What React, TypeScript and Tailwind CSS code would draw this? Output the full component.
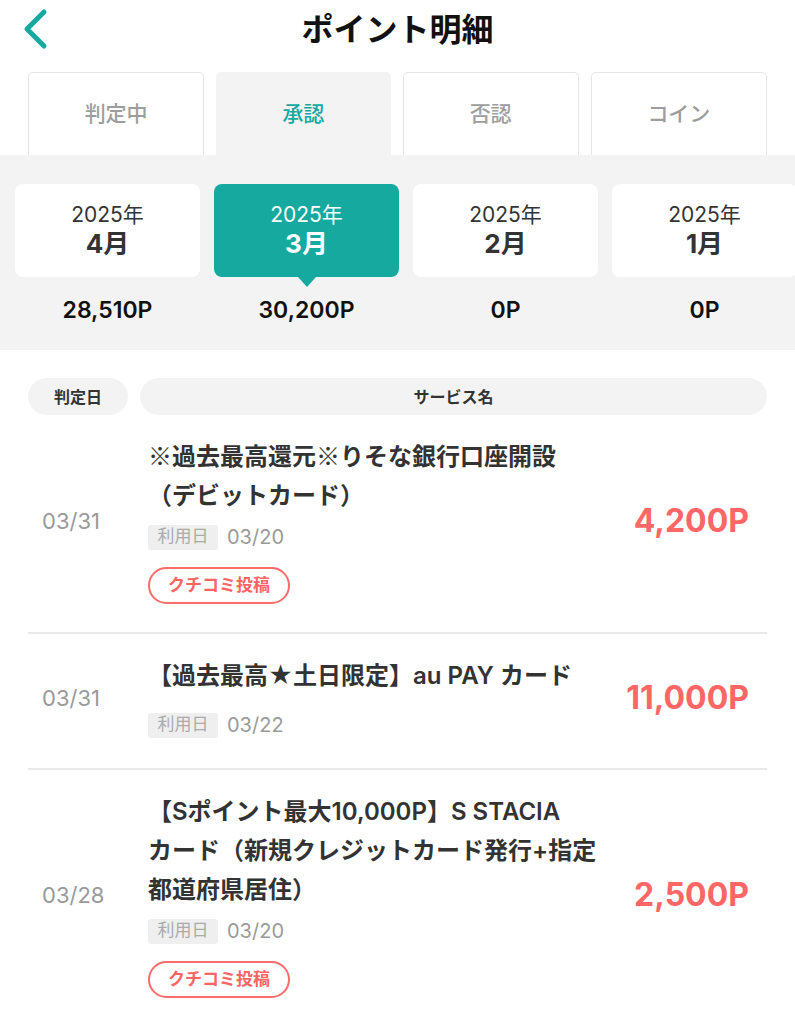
import React from 'react';

const TEAL = '#15a99f';

type Item = {
  date: string;
  lines: string[];
  useDate: string;
  points: string;
  review: boolean;
};

const tabs = ['判定中', '承認', '否認', 'コイン'];

const months = [
  { year: '2025年', month: '4月', points: '28,510P' },
  { year: '2025年', month: '3月', points: '30,200P', active: true },
  { year: '2025年', month: '2月', points: '0P' },
  { year: '2025年', month: '1月', points: '0P' },
];

const items: Item[] = [
  {
    date: '03/31',
    lines: ['※過去最高還元※りそな銀行口座開設', '（デビットカード）'],
    useDate: '03/20',
    points: '4,200P',
    review: true,
  },
  {
    date: '03/31',
    lines: ['【過去最高★土日限定】au PAY カード'],
    useDate: '03/22',
    points: '11,000P',
    review: false,
  },
  {
    date: '03/28',
    lines: ['【Sポイント最大10,000P】S STACIA', 'カード（新規クレジットカード発行+指定', '都道府県居住）'],
    useDate: '03/20',
    points: '2,500P',
    review: true,
  },
];

function BackIcon() {
  return (
    <svg width="30" height="44" viewBox="0 0 30 44" fill="none">
      <polyline
        points="22,4 5,21 22,38"
        stroke={TEAL}
        strokeWidth="5"
        strokeLinecap="round"
        strokeLinejoin="round"
      />
    </svg>
  );
}

// Inter has its own small ※, so force the full-width CJK one
function TitleLine({ text }: { text: string }) {
  return (
    <div className="h-[39px] overflow-visible whitespace-nowrap text-[24px] font-semibold leading-[39px] text-[#333]">
      {text.split(/(※)/).map((part, i) =>
        part === '※' ? (
          <span key={i} className="font-['Noto_Sans_CJK_JP'] leading-none">
            ※
          </span>
        ) : (
          <span key={i}>{part}</span>
        )
      )}
    </div>
  );
}

function Row({ item }: { item: Item }) {
  return (
    <div className="flex items-center border-b-2 border-[#e9e9e9] pt-[22px] pb-[28px]">
      <div className="w-[120px] shrink-0 pl-[14px] text-[22px] leading-[30px] text-[#9a9a9a]">{item.date}</div>
      <div className="flex flex-1 flex-col items-start">
        {item.lines.map((line) => (
          <TitleLine key={line} text={line} />
        ))}
        <div className={item.review ? 'mt-[7px] flex h-[30px] items-center gap-[9px]' : 'mt-[15px] flex h-[30px] items-center gap-[9px]'}>
          <span className="flex h-[25px] w-[70px] items-center justify-center rounded-[3px] bg-[#efefef] text-[17px] text-[#aaa]">
            利用日
          </span>
          <span className="text-[20px] text-[#9a9a9a]">{item.useDate}</span>
        </div>
        {item.review && (
          <div className="mt-[15px] flex h-[37px] w-[142px] items-center justify-center rounded-full border-2 border-[#ff6b6b] text-[17px] font-bold text-[#ff6464]">
            クチコミ投稿
          </div>
        )}
      </div>
      <div className="shrink-0 pr-[18px] text-[32px] font-bold text-[#ff6767]">{item.points}</div>
    </div>
  );
}

export default function App() {
  return (
    <div
      className="min-h-screen w-[795px] overflow-hidden bg-white"
      style={{ fontFamily: 'Inter, "Noto Sans CJK JP", sans-serif' }}
    >
      {/* header */}
      <div className="grid h-[72px] grid-cols-[1fr_auto_1fr] items-center px-[22px] pb-[12px]">
        <div className="flex items-center">
          <BackIcon />
        </div>
        <h1 className="text-[32px] font-bold text-[#111]">ポイント明細</h1>
        <div />
      </div>

      {/* tabs */}
      <div className="flex gap-[12px] px-[28px]">
        {tabs.map((t) => {
          const active = t === '承認';
          return (
            <div
              key={t}
              className={
                active
                  ? 'flex h-[83px] flex-1 items-center justify-center rounded-t-[5px] bg-[#f3f3f3] text-[21px] font-medium text-[#15a99f]'
                  : 'flex h-[83px] flex-1 items-center justify-center rounded-t-[5px] border border-b-0 border-[#e6e6e6] bg-white text-[21px] font-medium text-[#9d9d9d]'
              }
            >
              {t}
            </div>
          );
        })}
      </div>

      {/* months */}
      <div className="bg-[#f3f3f3] pt-[29px] pb-[25px]">
        <div className="flex gap-[14px] pl-[15px]">
          {months.map((m) => (
            <div key={m.month} className="flex w-[185px] shrink-0 flex-col items-center">
              <div
                className={
                  m.active
                    ? 'relative flex h-[93px] w-full flex-col items-center justify-center rounded-[8px] bg-[#15a99f] text-white'
                    : 'relative flex h-[93px] w-full flex-col items-center justify-center rounded-[8px] bg-white text-[#333]'
                }
              >
                <div className="text-[21px] leading-[26px]">{m.year}</div>
                <div className="text-[26px] font-bold leading-[32px]">{m.month}</div>
                {m.active && (
                  <div className="absolute -bottom-[10px] left-1/2 h-0 w-0 -translate-x-1/2 border-x-[9px] border-t-[10px] border-x-transparent border-t-[#15a99f]" />
                )}
              </div>
              <div className="mt-[18px] text-[23px] font-semibold leading-[30px] text-[#111]">{m.points}</div>
            </div>
          ))}
        </div>
      </div>

      {/* list */}
      <div className="px-[28px] pt-[28px]">
        <div className="flex gap-[12px]">
          <div className="flex h-[37px] w-[100px] items-center justify-center rounded-full bg-[#f3f3f3] text-[16px] font-bold text-[#333]">
            判定日
          </div>
          <div className="flex h-[37px] flex-1 items-center justify-center rounded-full bg-[#f3f3f3] text-[16px] font-bold text-[#333]">
            サービス名
          </div>
        </div>
        {items.map((item, i) => (
          <Row key={i} item={item} />
        ))}
      </div>
    </div>
  );
}
